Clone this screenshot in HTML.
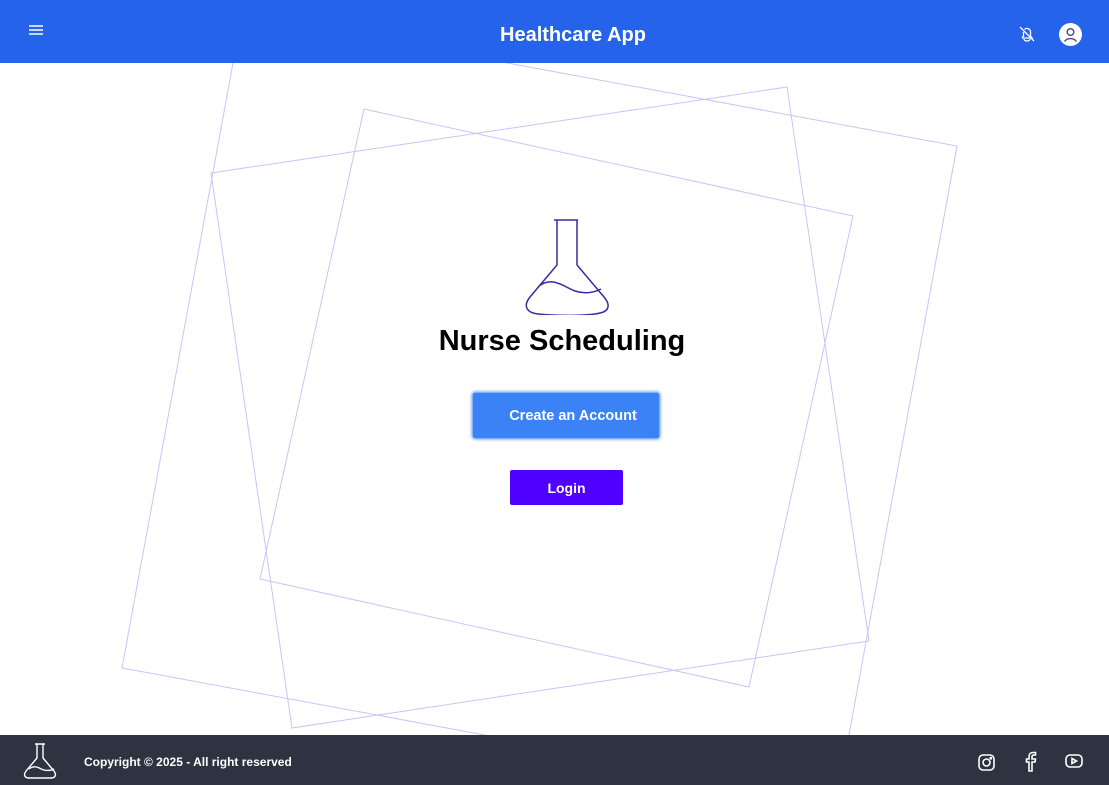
<!DOCTYPE html>
<html><head><meta charset="utf-8"><style>
*{margin:0;padding:0;box-sizing:border-box}
body{width:1109px;height:785px;position:relative;overflow:hidden;background:#fff;font-family:"Liberation Sans",sans-serif}
header{position:absolute;left:0;top:0;width:1109px;height:63px;background:#2563eb;z-index:2}
header h1{position:absolute;left:473px;width:200px;top:24px;text-align:center;color:#fff;font-size:20px;font-weight:bold}
footer{position:absolute;left:0;top:735px;width:1109px;height:50px;background:#2d3340;z-index:2}
footer .c{position:absolute;left:84px;top:20px;color:#fff;font-size:12px;font-weight:bold}
.t{position:absolute;left:0;right:0;top:325px;text-align:center;font-size:29px;font-weight:bold;color:#000;padding-left:15px}
.b1{position:absolute;left:473px;top:393px;width:186px;height:45px;background:#3b82f6;color:#fff;font-weight:bold;font-size:14.5px;text-align:center;line-height:47px;box-shadow:0 0 3px 1px #3b82f6;border-radius:2px;padding-left:14px}
.b2{position:absolute;left:510px;top:470px;width:113px;height:35px;background:#5000ff;color:#fff;font-weight:bold;font-size:14px;text-align:center;line-height:37px;border-radius:2px}
</style></head><body>
<svg style="position:absolute;left:0;top:0" width="1109" height="785" fill="none" stroke="#cbc3f7" stroke-width="1">
<polygon points="211,173 787,87 869,641 292,728"/>
<polygon points="364,109 853,216 749,687 260,579"/>
<polygon points="242,14 957,146 837,800 122,668"/>
</svg>
<header>
<svg style="position:absolute;left:28px;top:24px" width="16" height="12" stroke="#fff" stroke-width="1.6"><path d="M1 2h14M1 6h14M1 10h14"/></svg>
<h1>Healthcare App</h1>
<svg style="position:absolute;left:1018px;top:25px" width="18" height="18" fill="none" stroke="#fff" stroke-width="1.3"><path d="M6 14a3 2 0 0 0 6 0M4 13h10l-1.5-2V7a3.5 3.5 0 0 0-6-2.5M5.5 7v4L4 13M2 2l14 14"/></svg>
<svg style="position:absolute;left:1059px;top:23px" width="23" height="23"><circle cx="11.5" cy="11.5" r="11.5" fill="#fff"/><circle cx="11.5" cy="9" r="3.3" fill="none" stroke="#4b4580" stroke-width="1.4"/><path d="M5.5 18.5a7 6 0 0 1 12 0" fill="none" stroke="#4b4580" stroke-width="1.4"/></svg>
</header>
<svg style="position:absolute;left:520px;top:215px" width="95" height="100" fill="none" stroke="#3b2aa0" stroke-width="1.5"><path d="M34 5h24M37 5v45L10 82c-8 10-2 16 8 17 20 2 50 2 62 -1 10-2 10-9 4-16L57 50V5M18 72c14-12 26 0 37 4 9 3 18 2 26-2"/></svg>
<div class="t">Nurse Scheduling</div>
<div class="b1">Create an Account</div>
<div class="b2">Login</div>
<footer>
<svg style="position:absolute;left:22px;top:7px" width="38" height="38" fill="none" stroke="#fff" stroke-width="1.4"><path d="M13 2h10M15 2v14L4 29c-3 4-1 7 3 7h22c4 0 6-3 3-7L21 16V2M7 27c6-5 11 0 15 1 4 1 8 0 10-1"/></svg>
<div class="c">Copyright © 2025 - All right reserved</div>
<svg style="position:absolute;left:977px;top:18px" width="19" height="19" fill="none" stroke="#fff" stroke-width="1.6"><rect x="2" y="2" width="15" height="15" rx="4"/><circle cx="9.5" cy="9.5" r="3.5"/><circle cx="13.8" cy="5.2" r=".6" fill="#fff"/></svg>
<svg style="position:absolute;left:1023px;top:16px" width="14" height="22" fill="none" stroke="#fff" stroke-width="1.6"><path d="M9 20v-9h3l.5-3H9V6c0-1 .5-2 2-2h1.5V1.5H10C7 1.5 6 3 6 6v2H3.5v3H6v9z"/></svg>
<svg style="position:absolute;left:1064px;top:18px" width="20" height="17" fill="none" stroke="#fff" stroke-width="1.6"><rect x="2" y="2" width="16" height="12" rx="4"/><path d="M8 5.5v5l4.5-2.5z"/></svg>
</footer>
</body></html>
